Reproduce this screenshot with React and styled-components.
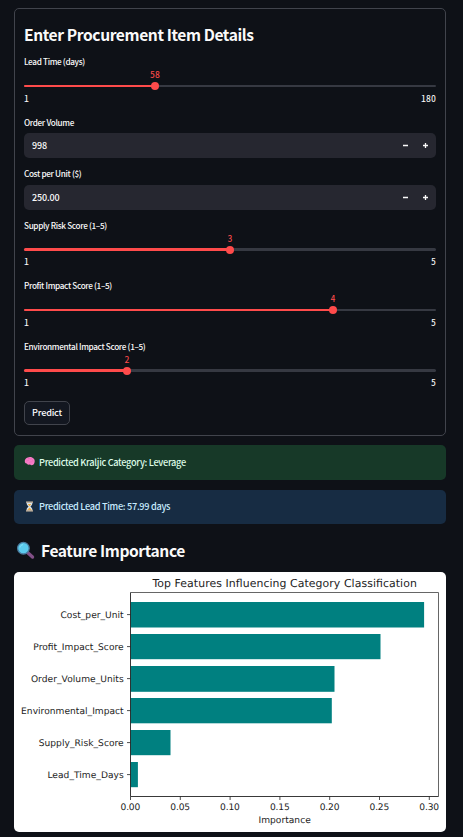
import React from "react";
import styled, { createGlobalStyle } from "styled-components";

const Global = createGlobalStyle`
  * { box-sizing: border-box; }
  html, body { margin: 0; background: #0e1117; }
  body { color: #fafafa; font-family: "Noto Sans CJK SC", "Open Sans", sans-serif; }
`;

const Page = styled.main`
  height: 837px;
  padding: 8px 17px 0 14px;
  overflow: hidden;
  display: flex;
  flex-direction: column;
`;

const Form = styled.form`
  height: 428px;
  margin: 0;
  padding: 13px 9px 0;
  border: 1px solid #41444c;
  border-radius: 5px;
  display: flex;
  flex-direction: column;
`;

const Title = styled.h2`
  margin: 0 0 10px;
  height: 24px;
  line-height: 24px;
  font-size: 15.6px;
  font-weight: 700;
  letter-spacing: -0.41px;
  white-space: nowrap;
`;

const Field = styled.div`
  height: ${(p) => p.$height}px;
  flex: none;
  display: flex;
  flex-direction: column;
`;

const Label = styled.label`
  height: 12px;
  line-height: 11px;
  font-size: 8.2px;
  font-weight: 500;
  letter-spacing: -0.34px;
  white-space: nowrap;
`;

const ValueRow = styled.div`
  height: 12px;
  margin-top: ${(p) => p.$gap}px;
  display: flex;
`;

const Value = styled.output`
  width: 20px;
  text-align: center;
  font: 9.8px/10px "Noto Sans Mono CJK SC", "Noto Sans CJK SC", monospace;
  letter-spacing: 0.1px;
  color: #ff4b4b;
`;

const Track = styled.div`
  height: ${(p) => p.$thick}px;
  margin-top: ${(p) => p.$gap}px;
  border-radius: 2px;
  background: #363942;
  display: flex;
  align-items: center;
`;

const Fill = styled.div`
  height: 100%;
  border-radius: 2px;
  background: #ff4b4b;
`;

const Thumb = styled.div`
  width: 8px;
  height: 8px;
  flex: none;
  margin-left: -4px;
  border-radius: 50%;
  background: #ff4b4b;
`;

const Ticks = styled.div`
  height: 12px;
  margin-top: ${(p) => p.$gap}px;
  display: flex;
  justify-content: space-between;
  font: 9.8px/10px "Noto Sans Mono CJK SC", "Liberation Mono", monospace;
  letter-spacing: 0.1px;
`;

const NumberBox = styled.div`
  height: 25px;
  margin-top: ${(p) => p.$gap}px;
  padding: 0 6px 0 8px;
  border-radius: 5px;
  background: #262730;
  display: flex;
  align-items: center;
  font-size: 9px;
  font-weight: 500;
  line-height: 25px;
`;

const Amount = styled.span`
  flex: 1;
  letter-spacing: -0.12px;
`;

const Steppers = styled.svg`
  width: 28px;
  height: 9px;
  display: block;
`;

const Button = styled.button`
  width: 46px;
  height: 24px;
  padding: 0 0 2px;
  border: 1px solid #41444c;
  border-radius: 5px;
  background: #131720;
  color: #fafafa;
  font: 500 9.1px/20px "Noto Sans CJK SC", sans-serif;
  letter-spacing: -0.2px;
`;

const Alert = styled.div`
  height: ${(p) => p.$height}px;
  flex: none;
  margin-top: ${(p) => p.$gap}px;
  padding: 0 0 2px 10px;
  border-radius: 5px;
  background: ${(p) => p.$bg};
  color: ${(p) => p.$color};
  display: flex;
  align-items: center;
  gap: 4px;
  font-size: 9.2px;
  font-weight: 500;
  line-height: 14px;
  letter-spacing: -0.31px;
  white-space: nowrap;
`;

const Emoji = styled.svg`
  width: ${(p) => p.$size}px;
  height: ${(p) => p.$size}px;
  flex: none;
  display: block;
`;

const Section = styled.div`
  height: 24px;
  margin: 14px 0 10px 2px;
  flex: none;
  display: flex;
  align-items: center;
  gap: 6px;
  h2 { margin: 0; }
`;

const ChartCard = styled.figure`
  height: 260px;
  flex: none;
  margin: 0;
  border-radius: 5px;
  background: #fff;
  overflow: hidden;
  svg { display: block; }
  text {
    font-family: "DejaVu Sans", sans-serif;
    fill: #1c1c1c;
    text-rendering: geometricPrecision;
  }
`;

function Slider({ label, value, percent, min, max, height, thick = 2 }) {
  return (
    <Field $height={height}>
      <Label>{label}</Label>
      <ValueRow $gap={thick === 2 ? 1 : 0.5}>
        <Value style={{ marginLeft: `calc(${percent}% - 10px)` }}>{value}</Value>
      </ValueRow>
      <Track $thick={thick} $gap={thick === 2 ? 4 : 3.5}>
        <Fill style={{ width: `${percent}%` }} />
        <Thumb />
      </Track>
      <Ticks $gap={thick === 2 ? 6 : 5}>
        <span>{min}</span>
        <span>{max}</span>
      </Ticks>
    </Field>
  );
}

function NumberField({ label, value, height, gap }) {
  return (
    <Field $height={height}>
      <Label>{label}</Label>
      <NumberBox $gap={gap}>
        <Amount>{value}</Amount>
        <Steppers viewBox="0 0 28 9" stroke="#fafafa" strokeWidth="1.3">
          <path d="M1 4.5h5M21 4.5h5M23.5 2v5" />
        </Steppers>
      </NumberBox>
    </Field>
  );
}

const bars = [
  ["Cost_per_Unit", 30, 25.5, 293.6, 63.3],
  ["Profit_Impact_Score", 62, 25.2, 250, 90.4],
  ["Order_Volume_Units", 94, 25.8, 204, 92.8],
  ["Environmental_Impact", 126, 25.3, 201.3, 102.6],
  ["Supply_Risk_Score", 158, 25.2, 40, 85],
  ["Lead_Time_Days", 190, 25.2, 7.4, 76.3],
];
const axisLabels = ["0.00", "0.05", "0.10", "0.15", "0.20", "0.25", "0.30"];

function Chart() {
  return (
    <ChartCard>
      <svg width="432" height="260" viewBox="0 0 432 260">
        <text x="138.5" y="15.2" fontSize="10.9" textLength="264.3">
          Top Features Influencing Category Classification
        </text>
        {bars.map(([name, y, h, w, length]) => (
          <g key={name}>
            <rect x="116.5" y={y} width={w} height={h} fill="#008080" />
            <path d={`M113 ${y + 12.6}h3.5`} stroke="#222" strokeWidth="0.8" />
            <text x={109.7} y={y + 16.1} textAnchor="end" fontSize="9.1" textLength={length}>
              {name}
            </text>
          </g>
        ))}
        <path d="M116.5 20.5H424.5V224.5" fill="none" stroke="#555" strokeWidth="0.9" />
        <path d="M116.5 20.5V224.5H424.5" fill="none" stroke="#222" strokeWidth="0.9" />
        {axisLabels.map((name, i) => (
          <g key={name}>
            <path d={`M${116.5 + i * 49.8} 224.5v3.5`} stroke="#222" strokeWidth="0.8" />
            <text x={116.4 + i * 49.8} y="238.4" textAnchor="middle" fontSize="9.1" textLength="19.8">
              {name}
            </text>
          </g>
        ))}
        <text x="270.6" y="251.3" textAnchor="middle" fontSize="9.1" textLength="52.3">
          Importance
        </text>
      </svg>
    </ChartCard>
  );
}

export default function App() {
  return (
    <Page>
      <Global />
      <Form>
        <Title>Enter Procurement Item Details</Title>
        <Slider label="Lead Time (days)" value="58" percent={31.8} min="1" max="180" height={61} />
        <NumberField label="Order Volume" value="998" height={51} gap={4} />
        <NumberField label="Cost per Unit ($)" value="250.00" height={52} gap={5} />
        <Slider label="Supply Risk Score (1–5)" value="3" percent={50} min="1" max="5" height={60} thick={3} />
        <Slider label="Profit Impact Score (1–5)" value="4" percent={75} min="1" max="5" height={61} />
        <Slider label="Environmental Impact Score (1–5)" value="2" percent={25} min="1" max="5" height={60} thick={3} />
        <Button type="button">Predict</Button>
      </Form>
      <Alert $height={35} $gap={9} $bg="#173928" $color="#dffde9">
        <Emoji $size={11} viewBox="0 0 11 11">
          <path d="M.8 5.5C.5 3.7 2 2 3.7 1.5 5.5.5 8 1 9.2 2.3c1.5.8 1.8 2.8 1.3 4.3-.2 1.7-1.5 2.8-3.1 2.7L6 8.5 4 8.8 2.7 7.4C1.6 7.6.8 6.6.8 5.5Z" fill="#f77bc5" />
          <path d="M2 5.5c1-1.4 2-.4 3-1.6M4 2.6c1.6-.6 2.2 1 3.8.1M5 6.7c1-1.2 2-.2 3.5-1.3M8 4.1c1-.1 1.3.5 1.2 1.2" fill="none" stroke="#e45fb3" strokeWidth=".5" />
        </Emoji>
        <span>Predicted Kraljic Category: Leverage</span>
      </Alert>
      <Alert $height={34} $gap={10} $bg="#172c43" $color="#c7ebff">
        <Emoji $size={11} viewBox="0 0 11 11">
          <path d="M2.5 1.5h6c0 2-1 3-2 4 1 1 2 2 2 4h-6c0-2 1-3 2-4-1-1-2-2-2-4Z" fill="#d8e5ed" />
          <path d="M3.6 3h3.8L5.5 5.2ZM5.5 6.5 7.8 9H3.2Z" fill="#f3ad42" />
          <path d="M2 1.1h7M2 9.9h7" stroke="#d2bba0" strokeWidth="1.3" />
        </Emoji>
        <span>Predicted Lead Time: 57.99 days</span>
      </Alert>
      <Section>
        <Emoji $size={19} viewBox="0 0 19 19">
          <path d="m11.5 11.5 5 4.5" stroke="#825087" strokeWidth="3.4" strokeLinecap="round" />
          <circle cx="7.4" cy="7.2" r="5.8" fill="#5bcbed" stroke="#4a7c9f" strokeWidth="1.3" />
          <path d="M4 6.5C4.2 4.8 5.4 3.8 7 3.7" fill="none" stroke="#8be4fa" strokeWidth="1" />
        </Emoji>
        <Title>Feature Importance</Title>
      </Section>
      <Chart />
    </Page>
  );
}
